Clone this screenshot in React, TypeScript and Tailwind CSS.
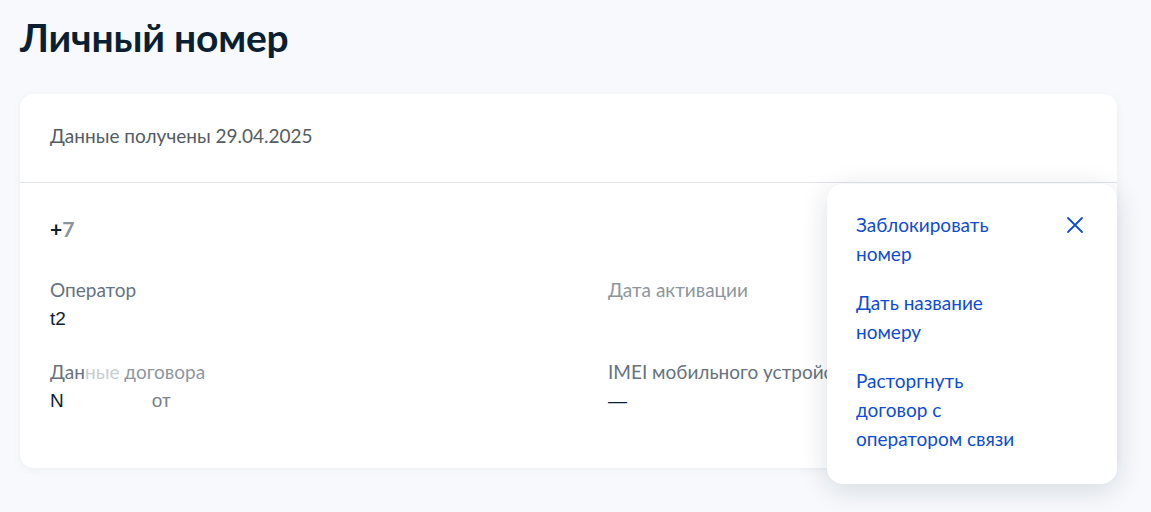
import React from "react";

const lato = { fontFamily: "Lato, 'Noto Sans', sans-serif" };

function Field({ label, children }: { label: React.ReactNode; children: React.ReactNode }) {
  return (
    <div className="flex flex-col">
      <div className="text-[19px] leading-[29px] text-[#66727f] whitespace-nowrap">{label}</div>
      <div className="text-[19px] leading-[30px] text-[#0b1f33] whitespace-nowrap" style={{ fontFamily: "'Liberation Sans', Arial, sans-serif" }}>
        {children}
      </div>
    </div>
  );
}

function CloseIcon() {
  return (
    <svg width="18" height="18" viewBox="0 0 18 18" fill="none" stroke="#0d4cd3" strokeWidth="1.8" strokeLinecap="round">
      <path d="M2 2L16 16M16 2L2 16" />
    </svg>
  );
}

export default function App() {
  return (
    <div className="min-h-[512px] w-full bg-[#f7f9fc] px-[20px] pt-[11px] pb-[40px]" style={lato}>
      <h1 className="text-[39px] leading-[52px] font-bold text-[#0b1f33] tracking-[-0.2px]">Личный номер</h1>

      <div className="relative mt-[31px] w-[1097px] rounded-[14px] bg-white shadow-[0_2px_10px_rgba(11,31,51,0.05)]">
        <div className="px-[30px] pt-[28px] pb-[32px] border-b border-[#e1e5ea]">
          <div className="text-[19px] leading-[28px] text-[#535b63]">Данные получены 29.04.2025</div>
        </div>

        <div className="px-[30px] pt-[32px] pb-[52px]">
          <div className="text-[21px] leading-[28px] font-bold text-[#0b1f33]">
            +<span className="text-[#8a949d]">7</span>
          </div>
          <div className="mt-[32px] grid grid-cols-[558px_1fr] gap-y-[23px]">
            <Field label="Оператор">t2</Field>
            <Field label={<span className="text-[#8d969e]">Дата активации</span>}>{"\u00a0"}</Field>
            <Field
              label={
                <span>
                  Дан<span className="text-[#c9ced3]">ные</span> <span className="text-[#8d969e]">договора</span>
                </span>
              }
            >
              N<span className="inline-block w-[88px]" />
              <span className="text-[#7a828a]">от</span>
            </Field>
            <Field label="IMEI мобильного устройства">—</Field>
          </div>
        </div>

        <div className="absolute right-0 top-[90px] w-[290px] rounded-[16px] bg-white shadow-[0_6px_28px_rgba(11,31,51,0.14)] pl-[29px] pr-[33px] pt-[26px] pb-[31px] flex justify-between">
          <div className="flex flex-col gap-[20px] w-[175px] text-[19px] leading-[29px] text-[#0d4cd3]">
            <span>Заблокировать номер</span>
            <span>Дать название номеру</span>
            <span>Расторгнуть договор с оператором связи</span>
          </div>
          <div className="pt-[6px]">
            <CloseIcon />
          </div>
        </div>
      </div>
    </div>
  );
}
